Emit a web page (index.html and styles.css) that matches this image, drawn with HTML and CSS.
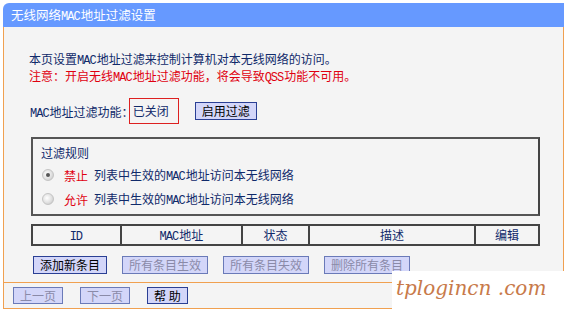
FILE: index.html
```html
<!DOCTYPE html>
<html>
<head>
<meta charset="utf-8">
<link rel="stylesheet" href="styles.css">
</head>
<body>
<div class="page">
  <div class="title">无线网络<span class="en">MAC</span>地址过滤设置</div>
  <div class="panel">
    <div class="intro">
      <p class="note">本页设置<span class="en">MAC</span>地址过滤来控制计算机对本无线网络的访问。</p>
      <p class="warn">注意：开启无线<span class="en">MAC</span>地址过滤功能，将会导致<span class="en">QSS</span>功能不可用。</p>
    </div>
    <div class="status-row">
      <span class="lbl"><span class="en">MAC</span>地址过滤功能：</span>
      <span class="state">已关闭</span>
      <button class="btn">启用过滤</button>
    </div>
    <div class="rules">
      <div class="rules-title">过滤规则</div>
      <label class="radio-row"><span class="radio checked"></span><span class="kw">禁止</span><span class="rtext">列表中生效的<span class="en">MAC</span>地址访问本无线网络</span></label>
      <label class="radio-row"><span class="radio"></span><span class="kw">允许</span><span class="rtext">列表中生效的<span class="en">MAC</span>地址访问本无线网络</span></label>
    </div>
    <table class="list">
      <tr><th class="c-id"><span class="en">ID</span></th><th class="c-mac"><span class="en">MAC</span>地址</th><th class="c-st">状态</th><th class="c-desc">描述</th><th class="c-ed">编辑</th></tr>
    </table>
    <div class="actions">
      <button class="btn">添加新条目</button>
      <button class="btn dis">所有条目生效</button>
      <button class="btn dis">所有条目失效</button>
      <button class="btn dis">删除所有条目</button>
    </div>
  </div>
  <div class="footer">
    <button class="btn dis">上一页</button>
    <button class="btn dis">下一页</button>
    <button class="btn">帮 助</button>
  </div>
  <div class="wm">tplogincn .com</div>
</div>
</body>
</html>
```
FILE: styles.css
```css
* { box-sizing: border-box; }
html, body { margin: 0; padding: 0; background: #ffffff; }
body {
  font-family: "Noto Sans CJK SC", "Liberation Sans", sans-serif;
  font-size: 12px;
  color: #102a6a;
}
.en {
  font-family: "Liberation Mono", monospace;
  font-size: 12px;
  letter-spacing: -1px;
  line-height: 0;
  margin-right: 1px;
}
.page {
  position: relative;
  width: 567px;
  height: 311px;
  padding: 3px 0 0 3px;
}
.title {
  width: 561px;
  height: 24px;
  background: #6699ff;
  color: #ffffff;
  font-size: 12.5px;
  line-height: 24px;
  padding-left: 8px;
  border-top-left-radius: 6px;
}
.panel {
  width: 561px;
  background: #f4f4f4;
  border-left: 1px solid #f0a050;
  border-right: 1px solid #f0a050;
  border-bottom: 1px solid #f0a050;
  padding: 23px 0 4px 0;
}
.intro { padding-left: 25px; }
.intro p { margin: 0; line-height: 17px; height: 17px; }
.warn { color: #e00010; }
.status-row {
  display: flex;
  align-items: center;
  padding-left: 26px;
  margin-top: 14px;
  height: 26px;
}
.lbl { margin-right: -5px; }
.state {
  border: 1px solid #dd2020;
  height: 26px;
  width: 50px;
  line-height: 24px;
  padding-left: 3px;
}
.status-row .btn { margin-left: 16px; }
.btn {
  font-family: "Noto Sans CJK SC", sans-serif;
  font-size: 12px;
  color: #000;
  background: #d3d6f9;
  border: 1px solid #2a3f94;
  height: 18px;
  line-height: 16px;
  padding: 0 6px;
  margin: 0;
  border-radius: 0;
}
.btn.dis { color: #8a8aa8; border-color: #6a7ab8; }
.rules {
  margin: 13px 0 0 27px;
  width: 509px;
  height: 79px;
  border: 2px solid #555;
  border-right-color: #444;
  padding: 6px 0 0 8px;
}
.rules-title { line-height: 16px; height: 16px; }
.radio-row {
  display: flex;
  align-items: center;
  height: 24px;
  margin-top: 2px;
}
.radio-row + .radio-row { margin-top: 0; }
.rtext { line-height: 16px; }
.radio {
  width: 12px; height: 12px;
  border-radius: 50%;
  background: radial-gradient(circle at 40% 40%, #ffffff 0%, #e0e0e0 55%, #bdbdbd 100%);
  border: 1px solid #c4c4c4;
  margin: 0 10px 0 1px;
  position: relative;
}
.radio.checked::after {
  content: "";
  position: absolute;
  left: 3px; top: 3px;
  width: 4px; height: 4px;
  border-radius: 50%;
  background: #555;
}
.kw { color: #e00010; margin-right: 6px; }
.list {
  margin: 8px 0 0 27px;
  width: 509px;
  border-collapse: collapse;
  border: 2px solid #444;
}
.list th {
  font-weight: normal;
  height: 20px;
  border: 1px solid #444;
  border-left-width: 2px;
  padding: 0;
  font-size: 12px;
  line-height: 18px;
}
.c-id { width: 89px; }
.c-mac { width: 122px; }
.c-st { width: 67px; }
.c-desc { width: 167px; }
.c-ed { width: 64px; }
.actions {
  display: flex;
  gap: 15px;
  padding-left: 29px;
  margin-top: 10px;
  height: 22px;
}
.footer {
  display: flex;
  gap: 17px;
  width: 561px;
  height: 26px;
  border-left: 1px solid #f0a050;
  border-right: 1px solid #f0a050;
  border-bottom: 1px solid #f0a050;
  background: #f4f4f4;
  padding: 4px 0 0 9px;
}
.footer .btn { height: 17px; }
.wm {
  position: absolute;
  right: 0;
  bottom: 0;
  width: 175px;
  height: 40px;
  background: #ffffff;
  color: #c87a4a;
  font-family: "DejaVu Serif", serif;
  font-style: italic;
  font-size: 20px;
  line-height: 34px;
  padding-left: 4px;
  white-space: nowrap;
}
```
